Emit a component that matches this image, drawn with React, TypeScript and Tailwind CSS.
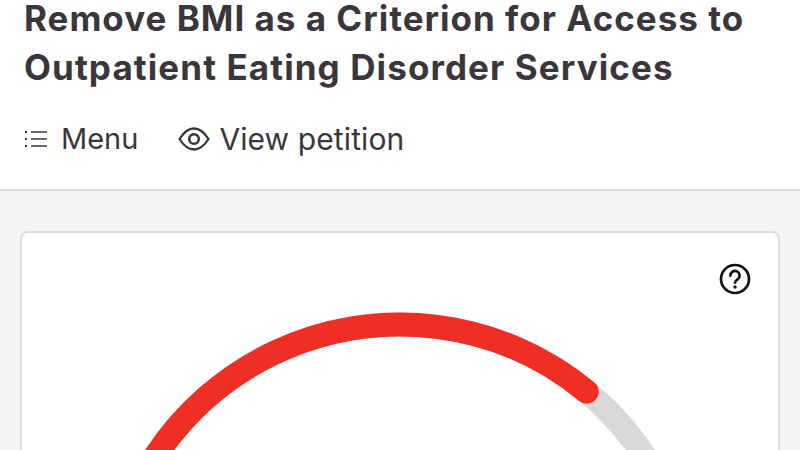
const INK = "text-[#39373b]";

function MenuIcon() {
  return (
    <svg width="24" height="24" viewBox="0 0 24 24" fill="none" stroke="currentColor" strokeWidth="1.5">
      <path d="M7 5h16M7 12h16M7 19h16" />
      <path d="M1 5h2M1 12h2M1 19h2" strokeWidth="2" />
    </svg>
  );
}

function EyeIcon() {
  return (
    <svg width="32" height="24" viewBox="0 0 32 24" fill="none" stroke="currentColor" strokeWidth="2.3">
      <path d="M1.5 12C6 4.8 10.8 1.5 16 1.5S26 4.8 30.5 12C26 19.2 21.2 22.5 16 22.5S6 19.2 1.5 12Z" strokeLinejoin="round" />
      <circle cx="16" cy="12" r="4.8" strokeWidth="2.6" />
    </svg>
  );
}

function HelpIcon() {
  return (
    <svg width="32" height="32" viewBox="0 0 32 32" fill="none" stroke="#111" strokeWidth="2.7">
      <circle cx="16" cy="16" r="14" />
      <path d="M11.4 12.6a4.6 4.6 0 1 1 7.2 3.7c-1.6 1-2.6 1.6-2.6 3.4" strokeLinecap="round" />
      <circle cx="16" cy="24" r="1.7" fill="#111" stroke="none" />
    </svg>
  );
}

export default function App() {
  return (
    <div className="h-[450px] overflow-hidden bg-white font-['Inter',sans-serif]">
      <header className={`border-b-2 border-[#dcdbdd] px-6 ${INK}`}>
        <h1 className="flex flex-col gap-3 text-[35px] leading-[37px] font-bold">
          <span className="tracking-[1px]">Remove BMI as a Criterion for Access to</span>
          <span className="tracking-[1.1px]">Outpatient Eating Disorder Services</span>
        </h1>
        <nav className="mt-8 flex h-[42px] items-center leading-[42px]">
          <button className="flex items-center gap-[13px] text-[29px]">
            <MenuIcon />
            Menu
          </button>
          <button className="ml-10 flex items-center gap-[9px] text-[30px] tracking-[0.1px]">
            <EyeIcon />
            View petition
          </button>
        </nav>
        <div className="h-[29px]" />
      </header>
      <main className="bg-[#f4f3f6] px-5 pt-10">
        <section className="relative h-[400px] rounded-lg border-2 border-[#dcdbdd] bg-white">
          <div className="absolute top-[30px] right-[27px]">
            <HelpIcon />
          </div>
          <svg className="mx-auto mt-[79px] block" width="756" height="322" viewBox="0 0 756 322" fill="none" strokeWidth="24" strokeLinecap="round">
            <circle cx="378" cy="305.5" r="293" stroke="#dad8db" />
            <path d="M85 305.5A293 293 0 0 1 564.7 79.7" stroke="#ef2e24" />
          </svg>
        </section>
      </main>
    </div>
  );
}
